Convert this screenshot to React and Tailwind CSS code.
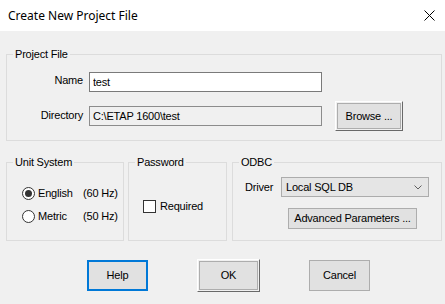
import React from "react";

const Radio = ({ checked }) => (
  <span className="w-[13px] h-[13px] rounded-full border border-[#333333] bg-white flex items-center justify-center shrink-0">
    {checked && <span className="w-[7px] h-[7px] rounded-full bg-[#333333]" />}
  </span>
);

const Raised = ({ w, h, children }) => (
  <div
    className={`${w} ${h} border border-t-white border-l-white border-r-[#696969] border-b-[#696969] p-[1px] flex`}
  >
    <div className="flex-1 border border-[#adadad] bg-[#e1e1e1] flex items-center justify-center">
      {children}
    </div>
  </div>
);

export default function App() {
  return (
    <div className="w-[445px] h-[304px] bg-[#f0f0f0] text-black overflow-hidden font-['Liberation_Sans',Arial,sans-serif] text-[11px] tracking-[-0.2px]">
      {/* title bar */}
      <div className="h-[31px] bg-white flex items-center justify-between pl-[8px] pr-[10px]">
        <span className="font-['Noto_Sans',sans-serif] text-[12px] tracking-normal text-[#000]">
          Create New Project File
        </span>
        <svg width="11" height="11" viewBox="0 0 11 11">
          <path d="M0.5 0.5 L10.5 10.5 M10.5 0.5 L0.5 10.5" stroke="#000" strokeWidth="1" />
        </svg>
      </div>

      <div className="pl-[6px] pr-[3px] pt-[17px]">
        {/* Project File */}
        <fieldset className="h-[93px] border border-[#dcdcdc]">
          <legend className="ml-[6px] px-[2px] leading-[13px]">Project File</legend>
          <div className="pt-[11px]">
            <div className="flex items-center h-[20px]">
              <span className="w-[76px] text-right pb-[4px]">Name</span>
              <input
                readOnly
                value="test"
                className="ml-[6px] w-[233px] h-[20px] border border-[#7a7a7a] bg-white pl-[3px] outline-none"
              />
            </div>
            <div className="flex items-center h-[30px] mt-[9px]">
              <span className="w-[76px] text-right pb-[1px]">Directory</span>
              <input
                readOnly
                value="C:\ETAP 1600\test"
                className="ml-[6px] w-[233px] h-[20px] border border-[#8c8c8c] bg-[#f0f0f0] pl-[3px] outline-none"
              />
              <div className="ml-[13px]">
                <Raised w="w-[68px]" h="h-[30px]">Browse ...</Raised>
              </div>
            </div>
          </div>
        </fieldset>

        <div className="flex mt-[15px]">
          {/* Unit System */}
          <fieldset className="w-[118px] h-[85px] shrink-0 border border-[#dcdcdc]">
            <legend className="ml-[6px] px-[2px] leading-[13px]">Unit System</legend>
            <div className="pt-[17px] pl-[15px]">
              <div className="flex items-center h-[15px]">
                <Radio checked />
                <span className="ml-[3px] w-[45px]">English</span>
                <span>(60 Hz)</span>
              </div>
              <div className="flex items-center h-[15px] mt-[8px]">
                <Radio />
                <span className="ml-[3px] w-[45px]">Metric</span>
                <span>(50 Hz)</span>
              </div>
            </div>
          </fieldset>

          {/* Password */}
          <fieldset className="ml-[4px] w-[99px] h-[85px] shrink-0 border border-[#dcdcdc]">
            <legend className="ml-[6px] px-[2px] leading-[13px]">Password</legend>
            <div className="pt-[29px] pl-[14px] flex items-center">
              <span className="w-[13px] h-[13px] border border-[#333333] bg-white shrink-0" />
              <span className="ml-[4px]">Required</span>
            </div>
          </fieldset>

          {/* ODBC */}
          <fieldset className="ml-[5px] w-[210px] h-[85px] shrink-0 border border-[#dcdcdc]">
            <legend className="ml-[6px] px-[2px] leading-[13px]">ODBC</legend>
            <div className="pt-[8px] pl-[12px]">
              <div className="flex items-center h-[20px]">
                <span className="w-[36px]">Driver</span>
                <div className="w-[148px] h-[20px] bg-[#e5e5e5] border border-[#acacac] flex items-center pl-[4px]">
                  <span>Local SQL DB</span>
                  <svg className="ml-auto mr-[6px]" width="8" height="5" viewBox="0 0 8 5">
                    <path d="M0.5 0.5 L4 4 L7.5 0.5" fill="none" stroke="#606060" strokeWidth="1" />
                  </svg>
                </div>
              </div>
              <div className="mt-[11px] ml-[43px] w-[129px] h-[21px] border border-[#adadad] bg-[#e1e1e1] flex items-center justify-center">
                Advanced Parameters ...
              </div>
            </div>
          </fieldset>
        </div>

        {/* buttons */}
        <div className="flex items-center h-[33px] mt-[18px] pl-[81px]">
          <div className="w-[61px] h-[31px] border-2 border-[#0078d7] bg-[#e1e1e1] flex items-center justify-center">
            Help
          </div>
          <div className="ml-[49px]">
            <Raised w="w-[63px]" h="h-[33px]">OK</Raised>
          </div>
          <div className="ml-[49px] w-[61px] h-[31px] border border-[#adadad] bg-[#e1e1e1] flex items-center justify-center">
            Cancel
          </div>
        </div>
      </div>
    </div>
  );
}
